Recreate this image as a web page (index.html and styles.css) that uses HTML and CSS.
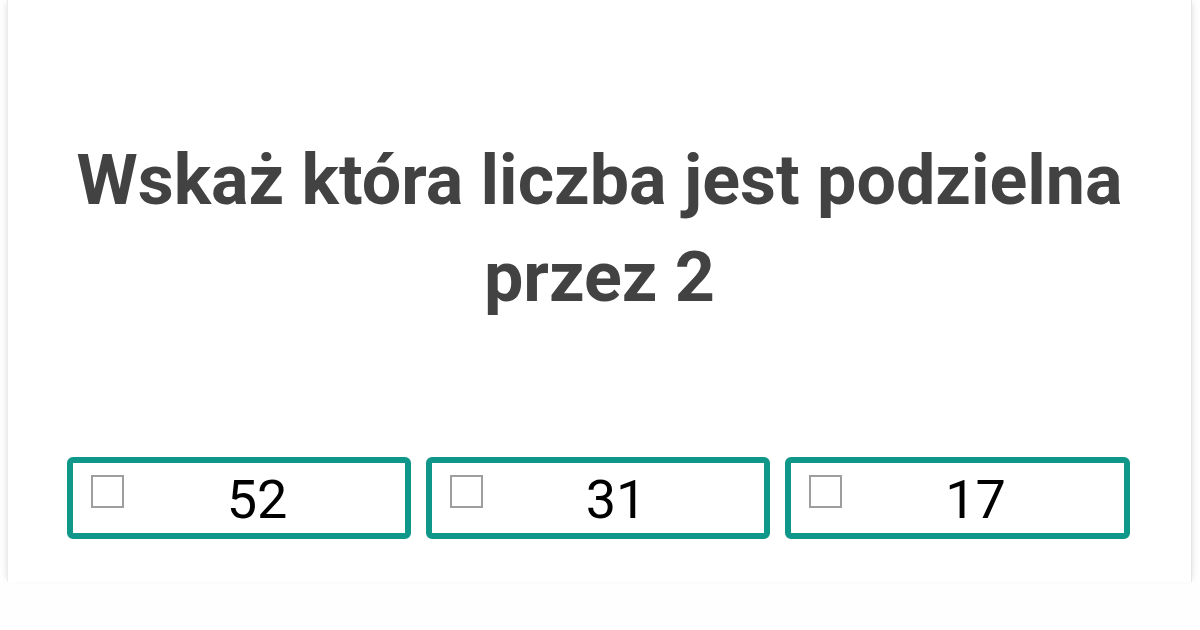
FILE: index.html
```html
<!DOCTYPE html>
<html lang="pl">
<head>
<meta charset="utf-8">
<link rel="stylesheet" href="styles.css">
</head>
<body>
<div class="card">
  <h1 class="question">Wskaż która liczba jest podzielna przez 2</h1>
  <div class="answers">
    <label class="answer"><span class="box"></span><span class="num">52</span></label>
    <label class="answer"><span class="box"></span><span class="num">31</span></label>
    <label class="answer"><span class="box"></span><span class="num">17</span></label>
  </div>
</div>
</body>
</html>
```

FILE: styles.css
```css
html, body {
  margin: 0;
  padding: 0;
  background: #fefefe;
}
body {
  width: 1200px;
  height: 630px;
  overflow: hidden;
  font-family: Roboto, "Liberation Sans", Arial, sans-serif;
}
.card {
  margin: 0 8px 0 7px;
  height: 582px;
  background: #fff;
  border-left: 1px solid #ececec;
  border-right: 1px solid #e6e6e6;
  box-shadow: -4px 0 5px -3px rgba(0,0,0,0.10), 4px 0 5px -3px rgba(0,0,0,0.10);
  box-sizing: border-box;
  padding: 132px 0 0;
}
.question {
  margin: 0 auto;
  width: 1100px;
  text-align: center;
  font-size: 70px;
  line-height: 97px;
  font-weight: 700;
  color: #424242;
}
.answers {
  margin: 131px 0 0 59px;
  display: grid;
  grid-template-columns: 344px 344px 345px;
  column-gap: 15px;
}
.answer {
  display: flex;
  align-items: flex-start;
  height: 82px;
  box-sizing: border-box;
  border: 6px solid #0f988a;
  border-radius: 6px;
  padding: 0 15px 0 18px;
  background: #fff;
}
.box {
  flex: none;
  width: 33px;
  height: 33px;
  box-sizing: border-box;
  border: 2px solid #9e9e9e;
  margin-top: 12px;
}
.num {
  flex: 1;
  text-align: center;
  font-size: 54px;
  line-height: 74px;
  color: #000;
}
```
